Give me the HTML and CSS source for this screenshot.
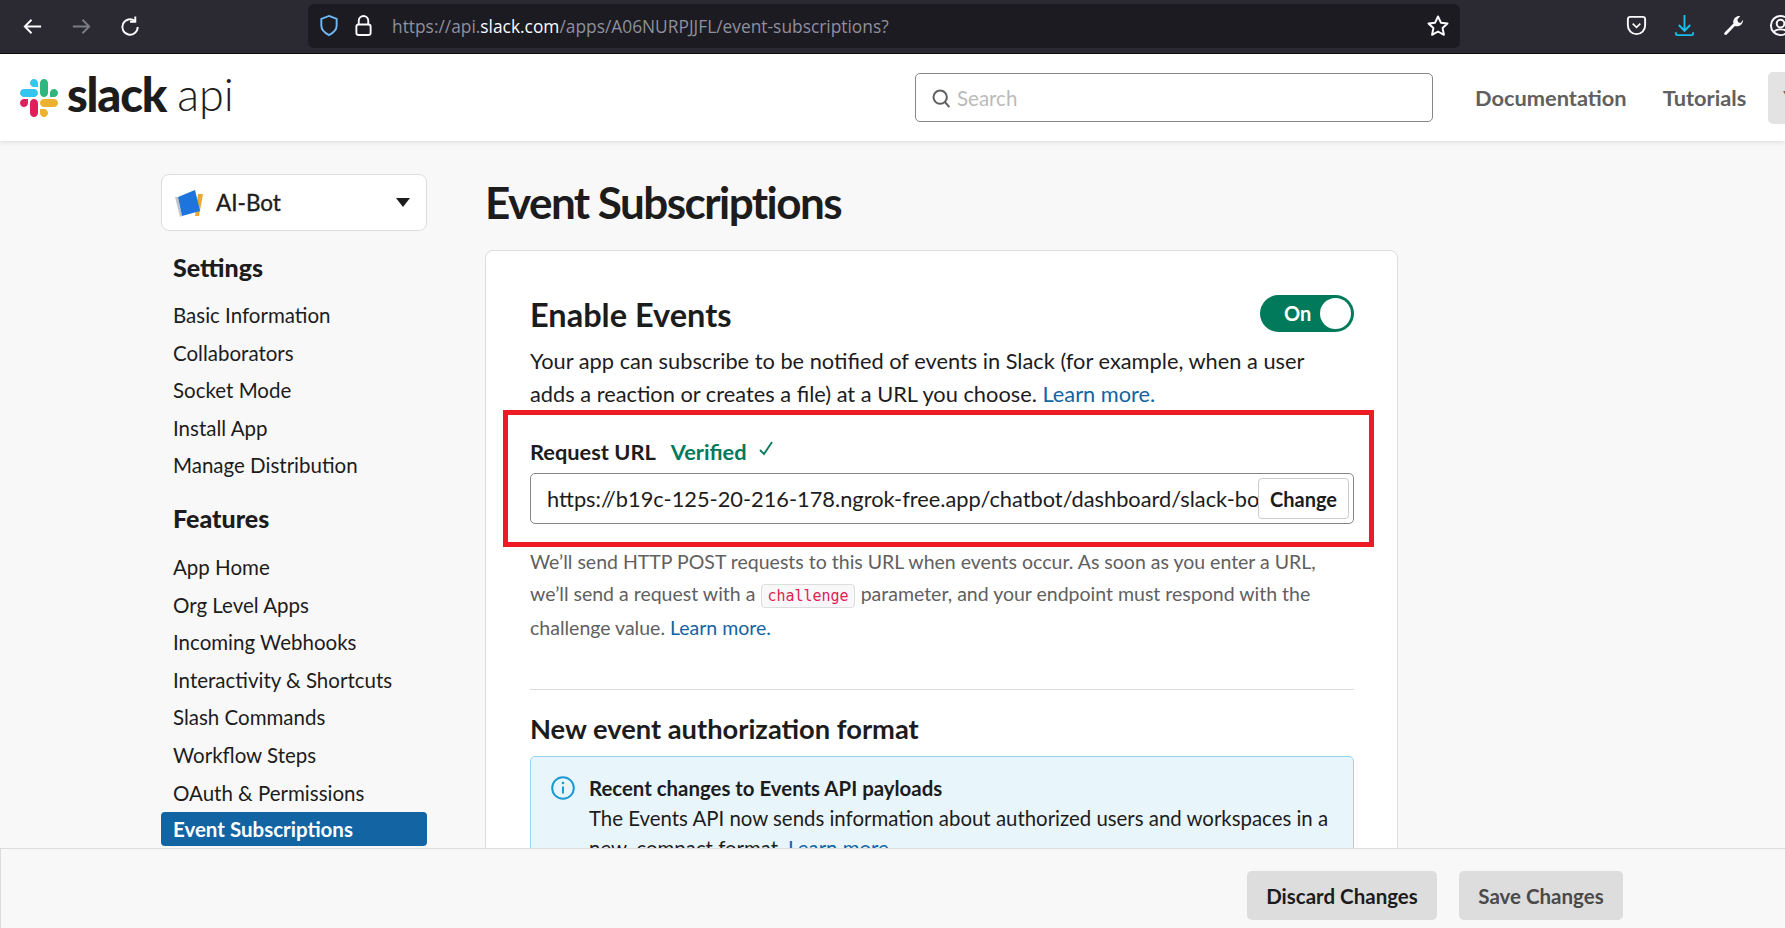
FILE: index.html
```html
<!DOCTYPE html>
<html>
	<head>
		<meta charset="UTF-8">
		<title>Event Subscriptions | Slack API</title>
		<link rel="stylesheet" href="styles.css">
	</head>
	<body>
		<div class="browser-bar">
			<div class="nav-icons">
				<svg class="ico" viewBox="0 0 24 24"><path d="M21 12H4M11 5l-7 7 7 7" fill="none" stroke="#fbfbfe" stroke-width="2"/></svg>
				<svg class="ico" viewBox="0 0 24 24"><path d="M3 12h17M13 5l7 7-7 7" fill="none" stroke="#7b7b82" stroke-width="2"/></svg>
				<svg class="ico" viewBox="0 0 24 24"><path d="M19.500 12.500a8 8 0 1 1-3-6.200M17 1.500v5.500h-5.500" fill="none" stroke="#fbfbfe" stroke-width="2"/></svg>
			</div>
			<div class="url-bar">
				<svg class="ico-shield" viewBox="0 0 20 24"><path d="M10 2l8 3v7c0 5-4 8-8 10-4-2-8-5-8-10V5z" fill="none" stroke="#6db7f5" stroke-width="2"/></svg>
				<svg class="ico-lock" viewBox="0 0 20 24"><path d="M5 11V7a5 5 0 0 1 10 0v4" fill="none" stroke="#fbfbfe" stroke-width="2"/><rect x="2.500" y="11" width="15" height="11" rx="2.500" fill="none" stroke="#fbfbfe" stroke-width="2"/></svg>
				<span class="url-text">https://api.<b>slack.com</b>/apps/A06NURPJJFL/event-subscriptions?</span>
				<svg class="ico-star" viewBox="0 0 24 24"><path d="M12 2.500l2.900 6.200 6.600.8-4.900 4.600 1.300 6.700-5.900-3.300-5.900 3.300 1.300-6.700-4.900-4.600 6.600-.8z" fill="none" stroke="#fbfbfe" stroke-width="2" stroke-linejoin="round"/></svg>
			</div>
			<div class="tool-icons">
				<svg class="ico" viewBox="0 0 24 24"><path d="M3 5.500C3 4 4 3 5.500 3h13C20 3 21 4 21 5.500V12c0 5-4 9-9 9s-9-4-9-9z" fill="none" stroke="#fbfbfe" stroke-width="2"/><path d="M8 10l4 4 4-4" fill="none" stroke="#fbfbfe" stroke-width="1.600"/></svg>
				<svg class="ico" viewBox="0 0 24 24"><path d="M12 1v16M6 11.500l6 6 6-6M3 19v1.500c0 1 .7 1.500 1.500 1.500h15c.8 0 1.500-.5 1.500-1.500V19" fill="none" stroke="#19bdea" stroke-width="2"/></svg>
				<svg class="ico" viewBox="0 0 24 24"><path d="M3 21l1-2 9-9c-1-3 1-7 5-8l2 0-3 4 1 2.500 2.500 1L23 6c0 5-4 8-8.500 6.500l-9 9.500z" fill="#fbfbfe"/></svg>
				<svg class="ico" viewBox="0 0 24 24"><circle cx="12" cy="12" r="10" fill="none" stroke="#fbfbfe" stroke-width="2"/><circle cx="12" cy="10" r="4" fill="none" stroke="#fbfbfe" stroke-width="2"/><path d="M5 19c2-4 12-4 14 0" fill="none" stroke="#fbfbfe" stroke-width="2"/></svg>
			</div>
		</div>

		<header class="site-header">
			<a class="logo">
				<svg class="logo-mark" viewBox="0 0 122.800 122.800">
					<path fill="#e01e5a" d="M25.800 77.600c0 7.100-5.800 12.900-12.900 12.900S0 84.700 0 77.600s5.800-12.900 12.900-12.900h12.900v12.900zM32.300 77.600c0-7.100 5.800-12.900 12.900-12.900s12.900 5.800 12.900 12.900v32.300c0 7.100-5.800 12.900-12.900 12.900s-12.900-5.800-12.900-12.900V77.600z"/>
					<path fill="#36c5f0" d="M45.200 25.800c-7.100 0-12.900-5.800-12.900-12.900S38.100 0 45.200 0s12.900 5.800 12.900 12.900v12.900H45.200zM45.200 32.300c7.100 0 12.900 5.800 12.900 12.900s-5.800 12.900-12.900 12.900H12.900C5.800 58.100 0 52.300 0 45.200s5.800-12.900 12.900-12.900h32.300z"/>
					<path fill="#2eb67d" d="M97 45.200c0-7.100 5.800-12.900 12.900-12.900s12.900 5.800 12.900 12.900-5.800 12.900-12.900 12.900H97V45.200zM90.500 45.200c0 7.100-5.800 12.900-12.900 12.900s-12.900-5.800-12.900-12.900V12.900C64.700 5.800 70.500 0 77.600 0s12.900 5.800 12.900 12.900v32.300z"/>
					<path fill="#ecb22e" d="M77.600 97c7.100 0 12.900 5.800 12.900 12.900s-5.800 12.900-12.900 12.900-12.900-5.800-12.900-12.900V97h12.900zM77.600 90.500c-7.100 0-12.900-5.800-12.900-12.900s5.800-12.900 12.900-12.900h32.300c7.100 0 12.900 5.800 12.900 12.900s-5.800 12.900-12.900 12.900H77.600z"/>
				</svg>
				<span class="logo-slack">slack</span>
				<span class="logo-api">api</span>
			</a>
			<div class="search">
				<svg class="search-ico" viewBox="0 0 24 24"><circle cx="11" cy="11" r="8" fill="none" stroke="#616061" stroke-width="2.400"/><path d="M16.500 16.500L22 23" stroke="#616061" stroke-width="2.400"/></svg>
				<span>Search</span>
			</div>
			<a class="top-link doc-link">Documentation</a>
			<a class="top-link">Tutorials</a>
			<span class="top-btn">Your Apps</span>
		</header>

		<div class="layout">
			<aside class="sidebar">
				<div class="app-select">
					<svg class="app-ico" viewBox="0 0 30 30">
						<path d="M0 9l3 0 4 19-2 1z" fill="#c4c4c4"/>
						<path d="M23 6l5 0-4 22-4 0z" fill="#e8a92f"/>
						<path d="M3 9L20 2l5 21-18 5z" fill="#1d74dd"/>
					</svg>
					<span class="app-name">AI-Bot</span>
					<span class="caret"></span>
				</div>
				<h3>Settings</h3>
				<a>Basic Information</a>
				<a>Collaborators</a>
				<a>Socket Mode</a>
				<a>Install App</a>
				<a>Manage Distribution</a>
				<h3 class="features">Features</h3>
				<a>App Home</a>
				<a>Org Level Apps</a>
				<a>Incoming Webhooks</a>
				<a>Interactivity &amp; Shortcuts</a>
				<a>Slash Commands</a>
				<a>Workflow Steps</a>
				<a>OAuth &amp; Permissions</a>
				<a class="active">Event Subscriptions</a>
			</aside>

			<main class="content">
				<h1>Event Subscriptions</h1>
				<section class="card">
					<div class="card-head">
						<h2>Enable Events</h2>
						<div class="toggle"><span>On</span><i></i></div>
					</div>
					<p class="intro">Your app can subscribe to be notified of events in Slack (for example, when a user adds a reaction or creates a file) at a URL you choose. <a class="link">Learn more.</a></p>
					<div class="request">
						<div class="red-box"></div>
						<div class="req-label"><b>Request URL</b><span class="verified">Verified</span><svg class="check" viewBox="0 0 16 16"><path d="M2 9l4 4 8-12" fill="none" stroke="#007a5a" stroke-width="1.800"/></svg></div>
						<div class="url-input">
							<span class="url-value">https://b19c-125-20-216-178.ngrok-free.app/chatbot/dashboard/slack-bot/events</span>
							<button class="change">Change</button>
						</div>
					</div>
					<p class="help">We’ll send HTTP POST requests to this URL when events occur. As soon as you enter a URL, we’ll send a request with a <code>challenge</code> parameter, and your endpoint must respond with the challenge value. <a class="link">Learn more.</a></p>
					<hr>
					<h4>New event authorization format</h4>
					<div class="callout">
						<svg class="info" viewBox="0 0 24 24"><circle cx="12" cy="12" r="10.800" fill="none" stroke="#1d9bd1" stroke-width="2"/><path d="M12 10.500v7" stroke="#1d9bd1" stroke-width="2"/><circle cx="12" cy="7" r="1.300" fill="#1d9bd1"/></svg>
						<div>
							<b>Recent changes to Events API payloads</b>
							<p>The Events API now sends information about authorized users and workspaces in a new, compact format. <a>Learn more.</a></p>
						</div>
					</div>
				</section>
			</main>
		</div>

		<footer class="save-bar">
			<button class="btn">Discard Changes</button>
			<button class="btn btn-save">Save Changes</button>
		</footer>
	</body>
</html>
```

FILE: styles.css
```css
html, body{
	margin: 0;
	height: 928px;
	overflow: hidden;
}
body{
	background-color: #f8f8f8;
	font-family: "Lato", "Liberation Sans", sans-serif;
	color: #1d1c1d;
	position: relative;
}
h1, h2, h3, h4, p{
	margin: 0;
}

/* browser chrome */
.browser-bar{
	height: 53px;
	background-color: #2b2a33;
	border-bottom: 1px solid #0c0c0d;
	display: flex;
	align-items: center;
	overflow: hidden;
}
.nav-icons{
	width: 308px;
	display: flex;
	gap: 26px;
	padding-left: 21px;
	box-sizing: border-box;
	margin-top: -1px;
	flex: none;
}
.ico{
	width: 23px;
	height: 23px;
	flex: none;
}
.url-bar{
	width: 1152px;
	height: 44px;
	background-color: #1c1b22;
	border-radius: 6px;
	display: flex;
	align-items: center;
	padding-left: 11px;
	box-sizing: border-box;
	margin-top: -2px;
	flex: none;
}
.ico-shield{
	width: 20px;
	height: 23px;
}
.ico-lock{
	width: 19px;
	height: 23px;
	margin-left: 15px;
}
.url-text{
	font-family: "Open Sans", sans-serif;
	font-size: 17.350px;
	color: #8f8f9d;
	margin-left: 19px;
}
.url-text b{
	font-weight: 400;
	color: #fbfbfe;
}
.ico-star{
	width: 24px;
	height: 24px;
	margin-left: auto;
	margin-right: 10px;
}
.tool-icons{
	display: flex;
	gap: 25px;
	padding-left: 165px;
	margin-top: -2px;
	flex: none;
}

/* site header */
.site-header{
	height: 87px;
	background-color: #fff;
	box-shadow: 0 1px 5px rgba(0, 0, 0, .12);
	display: flex;
	align-items: center;
	padding-left: 20px;
	position: relative;
	overflow-x: clip;
}
.logo{
	display: flex;
	align-items: center;
	width: 895px;
	flex: none;
}
.logo-mark{
	width: 38px;
	height: 38px;
}
.logo-slack{
	font-weight: 900;
	font-size: 47px;
	letter-spacing: -1.200px;
	margin-left: 9px;
	margin-top: -8px;
}
.logo-api{
	font-weight: 300;
	font-size: 45px;
	margin-left: 11px;
	margin-top: -8px;
}
.search{
	width: 518px;
	height: 49px;
	border: 1px solid #868686;
	border-radius: 5px;
	box-sizing: border-box;
	display: flex;
	align-items: center;
	padding-left: 15px;
	font-size: 20.500px;
	color: #bbb;
	flex: none;
}
.search-ico{
	width: 20px;
	height: 20px;
	margin-right: 6px;
}
.top-link{
	font-size: 21.800px;
	font-weight: 700;
	color: #616061;
	margin-left: 36px;
	flex: none;
}
.doc-link{
	margin-left: 42px;
}
.top-btn{
	height: 52px;
	line-height: 52px;
	background-color: #e3e3e3;
	border-radius: 5px;
	margin-left: 22px;
	padding-left: 15px;
	width: 120px;
	font-size: 20px;
	font-weight: 700;
	color: #616061;
	flex: none;
}

/* page */
.layout{
	display: flex;
	padding-left: 161px;
	gap: 58px;
}
.sidebar{
	width: 266px;
	padding-top: 33px;
	flex: none;
}
.app-select{
	height: 57px;
	background-color: #fff;
	border: 1px solid #ddd;
	border-radius: 8px;
	box-sizing: border-box;
	display: flex;
	align-items: center;
	padding: 0 16px 0 13px;
}
.app-ico{
	width: 30px;
	height: 30px;
	flex: none;
}
.app-name{
	font-size: 22.500px;
	font-weight: 400;
	-webkit-text-stroke: .35px #1d1c1d;
	margin-left: 11px;
}
.caret{
	margin-left: auto;
	border-left: 7.500px solid transparent;
	border-right: 7.500px solid transparent;
	border-top: 9px solid #1d1c1d;
}
.sidebar h3{
	font-size: 25px;
	font-weight: 900;
	padding-left: 12px;
	margin-top: 20px;
	margin-bottom: 13px;
	line-height: 32px;
}
.sidebar h3.features{
	margin-top: 18px;
	margin-bottom: 14px;
}
.sidebar a{
	display: block;
	font-size: 20.500px;
	line-height: 34px;
	height: 34px;
	padding: 2px 0 1.600px 12px;
}
.sidebar a.active{
	background-color: #1264a3;
	color: #fff;
	font-weight: 700;
	border-radius: 4px;
	line-height: 34px;
	height: 34px;
	padding: 0 0 0 12px;
	margin-top: 1px;
}

.content{
	width: 913px;
	flex: none;
}
h1{
	font-size: 44px;
	font-weight: 700;
	letter-spacing: -1.550px;
	line-height: 60px;
	margin-top: 31px;
	margin-bottom: 18px;
}
.card{
	background-color: #fff;
	border: 1px solid #ddd;
	border-radius: 8px;
	padding: 43px 43px 0 44px;
	height: 700px;
	box-sizing: border-box;
}
.card-head{
	display: flex;
	justify-content: space-between;
	align-items: center;
	height: 38px;
}
h2{
	font-size: 32.500px;
	font-weight: 700;
	line-height: 38px;
	margin-top: 4px;
}
.toggle{
	width: 94px;
	height: 37px;
	background-color: #007a5a;
	border-radius: 19px;
	display: flex;
	align-items: center;
	justify-content: space-between;
	box-sizing: border-box;
	padding: 0 3px 0 24px;
	color: #fff;
	font-size: 20px;
	font-weight: 700;
}
.toggle i{
	width: 31px;
	height: 31px;
	background-color: #fff;
	border-radius: 50%;
}
.intro{
	font-size: 21.800px;
	line-height: 33px;
	margin-top: 12px;
}
.link, .callout a{
	color: #1264a3;
}
.request{
	position: relative;
	margin-top: 27px;
}
.red-box{
	position: absolute;
	left: -27px;
	right: -20px;
	top: -27px;
	bottom: -23px;
	border: 5px solid #ed1c24;
}
.req-label{
	display: flex;
	align-items: center;
	font-size: 21.800px;
	line-height: 30px;
}
.req-label b{
	font-weight: 700;
}
.verified{
	color: #007a5a;
	font-weight: 700;
	margin-left: 15px;
}
.check{
	width: 16px;
	height: 16px;
	margin-left: 11px;
	margin-top: -6px;
}
.url-input{
	margin-top: 6px;
	height: 51px;
	border: 1px solid #868686;
	border-radius: 5px;
	box-sizing: border-box;
	display: flex;
	align-items: center;
	padding: 0 4px 0 16px;
	font-size: 21.800px;
}
.url-value{
	width: 711px;
	overflow: hidden;
	white-space: nowrap;
	flex: none;
}
.change{
	width: 91px;
	height: 41px;
	background-color: #fff;
	border: 1px solid #ccc;
	border-radius: 4px;
	font-family: "Lato", sans-serif;
	font-size: 20px;
	font-weight: 700;
	color: #1d1c1d;
	flex: none;
	padding: 0;
}
.help{
	font-size: 19.500px;
	line-height: 32px;
	color: #616061;
	margin-top: 22px;
}
code{
	font-family: "DejaVu Sans Mono", "Liberation Mono", monospace;
	font-size: 15px;
	color: #e01e5a;
	background-color: #f8f8f8;
	border: 1px solid #ddd;
	border-radius: 4px;
	padding: 2px 5px;
	margin: 0 1px;
}
hr{
	border: none;
	border-top: 1px solid #ddd;
	margin: 45px 0 0;
}
h4{
	font-size: 27.300px;
	font-weight: 700;
	line-height: 36px;
	margin-top: 21px;
}
.callout{
	margin-top: 9px;
	background-color: #e8f5fa;
	border: 1px solid #97d4ef;
	border-radius: 5px;
	padding: 17px 20px 20px 20px;
	display: flex;
	gap: 14px;
	font-size: 20.400px;
}
.info{
	width: 24px;
	height: 24px;
	flex: none;
	margin-top: 2px;
}
.callout b{
	font-weight: 700;
	line-height: 29px;
	display: block;
}
.callout p{
	line-height: 30px;
}

/* bottom bar lies over the page */
.save-bar{
	position: absolute;
	left: 0;
	right: 0;
	bottom: 0;
	height: 80px;
	background-color: #f8f8f8;
	border-top: 1px solid #ddd;
	border-left: 1px solid #ddd;
	box-sizing: border-box;
	display: flex;
	justify-content: flex-end;
	align-items: flex-start;
	gap: 22px;
	padding: 22px 162px 0 0;
}
.btn{
	height: 49px;
	width: 190px;
	background-color: #dddddd;
	border: none;
	border-radius: 5px;
	font-family: "Lato", sans-serif;
	font-size: 20.500px;
	font-weight: 700;
	color: #1d1c1d;
	padding: 0;
}
.btn-save{
	width: 164px;
	color: #4a4a4a;
}
```
